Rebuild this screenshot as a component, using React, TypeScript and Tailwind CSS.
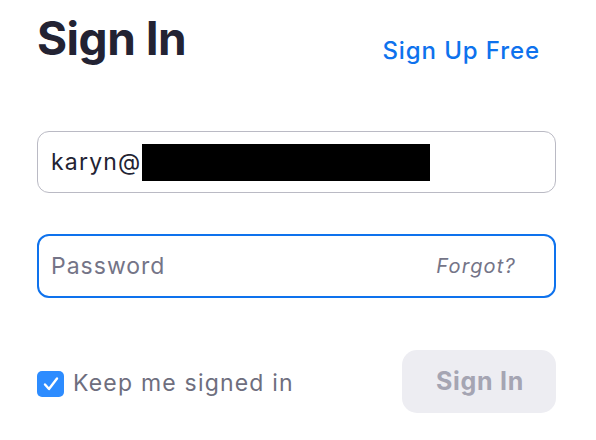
export default function App() {
  return (
    <div className="w-[596px] h-[440px] bg-white pl-[37px] pr-[40px] font-['Inter',sans-serif]">
      {/* Header */}
      <div className="flex items-start justify-between pt-[11px]">
        <h1 className="text-[46px] leading-[54px] font-bold text-[#232333] tracking-[-0.5px]">
          Sign In
        </h1>
        <a className="mt-[25px] mr-[16px] text-[24px] leading-[30px] font-medium tracking-[0.9px] text-[#0e72ed]">
          Sign Up Free
        </a>
      </div>

      {/* Email */}
      <div className="mt-[65px] h-[62px] rounded-[12px] border border-[#babac4] flex items-center pl-[13px]">
        <span className="text-[23px] tracking-[1.2px] text-[#232333]">karyn@</span>
        <span className="ml-[0px] w-[288px] h-[37px] bg-black" />
      </div>

      {/* Password */}
      <div className="mt-[41px] h-[64px] rounded-[12px] border-2 border-[#0e72ed] flex items-center justify-between pl-[12px] pr-[38px]">
        <span className="text-[23px] tracking-[1px] text-[#747487]">Password</span>
        <span className="text-[20px] italic tracking-[1.2px] text-[#747487]">Forgot?</span>
      </div>

      {/* Footer */}
      <div className="mt-[52px] flex items-center justify-between">
        <label className="flex items-center gap-[9px] mt-[4px]">
          <span className="w-[27px] h-[26px] rounded-[5px] bg-[#2d8cff] flex items-center justify-center">
            <svg width="18" height="16" viewBox="0 0 18 16" fill="none">
              <path d="M3 8.5 L7 13 L15 2.5" stroke="white" strokeWidth="2.4" strokeLinecap="round" strokeLinejoin="round" />
            </svg>
          </span>
          <span className="text-[23px] tracking-[1.2px] text-[#6e6e7e]">Keep me signed in</span>
        </label>
        <button className="w-[154px] h-[63px] rounded-[15px] bg-[#ededf2] pl-[2px] text-[25px] font-bold tracking-[0.7px] text-[#a5a5b3]">
          Sign In
        </button>
      </div>
    </div>
  );
}
